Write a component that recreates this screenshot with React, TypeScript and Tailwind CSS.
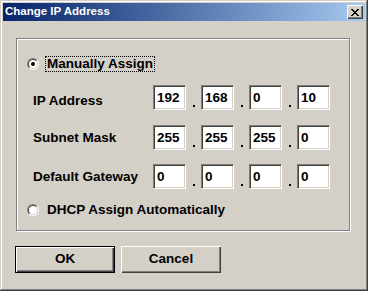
import React from 'react';

const rows = [
  { label: 'IP Address', values: ['192', '168', '0', '10'], labelPad: 'pt-[7px]' },
  { label: 'Subnet Mask', values: ['255', '255', '255', '0'], labelPad: '' },
  { label: 'Default Gateway', values: ['0', '0', '0', '0'], labelPad: '' },
];

const Radio = ({ checked }: { checked?: boolean }) => (
  <span className="flex h-[12px] w-[12px] shrink-0 rounded-full border border-t-[#808080] border-l-[#808080] border-b-white border-r-white">
    <span className="flex h-full w-full items-center justify-center rounded-full border border-t-[#404040] border-l-[#404040] border-b-[#d4d0c8] border-r-[#d4d0c8] bg-white">
      {checked && <span className="h-[4px] w-[4px] rounded-full bg-black" />}
    </span>
  </span>
);

const CloseGlyph = () => (
  <svg width="8" height="7" viewBox="0 0 8 7" shapeRendering="crispEdges">
    <path
      d="M0 0h2v1H0zM6 0h2v1H6zM1 1h2v1H1zM5 1h2v1H5zM2 2h4v1H2zM3 3h2v1H3zM2 4h4v1H2zM1 5h2v1H1zM5 5h2v1H5zM0 6h2v1H0zM6 6h2v1H6z"
      fill="#000"
    />
  </svg>
);

const IpField = ({ values }: { values: string[] }) => (
  <div className="flex">
    {values.map((v, i) => (
      <React.Fragment key={i}>
        {i > 0 && (
          <div className="flex w-[15px] items-end justify-center pb-[3px]">
            <span className="h-[2px] w-[2px] bg-black" />
          </div>
        )}
        <div className="flex h-[25px] w-[33px] items-center border border-t-[#808080] border-l-[#808080] border-b-white border-r-white bg-white pl-[3px] shadow-[inset_1px_1px_0_#404040,inset_-1px_-1px_0_#d4d0c8]">
          {v}
        </div>
      </React.Fragment>
    ))}
  </div>
);

const App = () => {
  return (
    <div
      className="h-[291px] w-[368px] overflow-hidden bg-[#d4d0c8] text-[13.5px] font-bold text-black shadow-[inset_-1px_-1px_0_#404040,inset_1px_1px_0_#d4d0c8,inset_-2px_-2px_0_#808080,inset_2px_2px_0_#fff]"
      style={{ fontFamily: '"Liberation Sans", Arial, sans-serif' }}
    >
      {/* title bar */}
      <div className="mx-[3px] mt-[3px] flex h-[18px] items-center justify-between bg-linear-to-r from-[#0a246a] to-[#a6caf0] pl-[2px] pr-[2px]">
        <span className="text-[11.5px] font-bold text-white">Change IP Address</span>
        <button className="flex h-[14px] w-[16px] items-center justify-center bg-[#d4d0c8] shadow-[inset_1px_1px_0_#fff,inset_-1px_-1px_0_#404040,inset_-2px_-2px_0_#808080]">
          <CloseGlyph />
        </button>
      </div>

      {/* group box */}
      <div className="ml-[16px] mt-[17px] h-[193px] w-[334px] border border-[#808080] pl-[10px] pt-[18px] shadow-[1px_1px_0_#fff,inset_1px_1px_0_#fff]">
        <div className="flex h-[14px] items-center">
          <Radio checked />
          <span className="ml-[6px] flex h-[16px] items-center border border-dotted border-black px-[1px]">
            Manually Assign
          </span>
        </div>

        {rows.map((row, idx) => (
          <div key={row.label} className={`ml-[6px] flex items-center ${idx === 0 ? 'mt-[13px]' : 'mt-[14px]'}`}>
            <span className={`w-[120px] ${row.labelPad}`}>{row.label}</span>
            <IpField values={row.values} />
          </div>
        ))}

        <div className="mt-[14px] flex h-[14px] items-center">
          <Radio />
          <span className="ml-[6px] flex h-[16px] items-center border border-transparent px-[1px]">
            DHCP Assign Automatically
          </span>
        </div>
      </div>

      {/* buttons */}
      <div className="ml-[15px] mt-[15px] flex gap-[6px]">
        <button className="h-[27px] w-[100px] border border-black">
          <div className="flex h-full w-full items-center justify-center shadow-[inset_1px_1px_0_#fff,inset_-1px_-1px_0_#404040,inset_-2px_-2px_0_#808080]">
            OK
          </div>
        </button>
        <button className="flex h-[27px] w-[100px] items-center justify-center shadow-[inset_1px_1px_0_#fff,inset_-1px_-1px_0_#404040,inset_-2px_-2px_0_#808080]">
          Cancel
        </button>
      </div>
    </div>
  );
};

export default App;
